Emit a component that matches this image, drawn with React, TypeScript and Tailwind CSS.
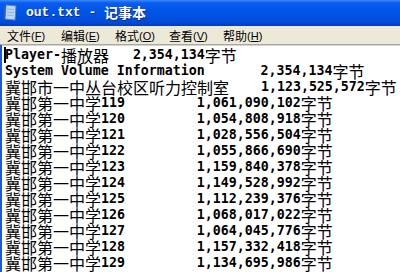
import React from "react";

const lines = [
  "Player-播放器   2,354,134字节",
  "System Volume Information       2,354,134字节",
  "冀邯市一中丛台校区听力控制室    1,123,525,572字节",
  "冀邯第一中学119         1,061,090,102字节",
  "冀邯第一中学120         1,054,808,918字节",
  "冀邯第一中学121         1,028,556,504字节",
  "冀邯第一中学122         1,055,866,690字节",
  "冀邯第一中学123         1,159,840,378字节",
  "冀邯第一中学124         1,149,528,992字节",
  "冀邯第一中学125         1,112,239,376字节",
  "冀邯第一中学126         1,068,017,022字节",
  "冀邯第一中学127         1,064,045,776字节",
  "冀邯第一中学128         1,157,332,418字节",
  "冀邯第一中学129         1,134,695,986字节",
];

const menus = [
  ["文件", "F"],
  ["编辑", "E"],
  ["格式", "O"],
  ["查看", "V"],
  ["帮助", "H"],
];

function Line({ text, first }: { text: string; first?: boolean }) {
  const parts = text.split(/([\u4e00-\u9fff]+)/).filter(Boolean);
  return (
    <div className="relative flex h-4 items-center whitespace-pre">
      {first && <span className="absolute left-[-1px] top-0 h-4 w-[2px] bg-black" />}
      {parts.map((p, i) =>
        /[\u4e00-\u9fff]/.test(p) ? (
          <span key={i} className="text-[16px] leading-4 font-normal [font-family:'Noto_Sans_CJK_SC',sans-serif]">
            {p}
          </span>
        ) : (
          <span key={i} className="text-[13.28px] leading-4 font-bold [font-family:'DejaVu_Sans_Mono',monospace]">
            {p}
          </span>
        )
      )}
    </div>
  );
}

function NotepadIcon() {
  return (
    <svg width="14" height="17" viewBox="0 0 14 17">
      <path d="M3 1 L13 2 L12 16 L2 15 Z" fill="#bcd6f2" stroke="#5a86c6" strokeWidth="1" />
      <path d="M1 2 L3 1 L2 15 L0.5 15.5 Z" fill="#2a5fb4" />
      <path d="M4 5 L11 5.6 M4 8 L11 8.6 M4 11 L10 11.5" stroke="#8fb2e0" strokeWidth="1" />
    </svg>
  );
}

export default function App() {
  return (
    <div className="h-[272px] w-[400px] overflow-hidden bg-white [font-family:'Liberation_Sans','Noto_Sans_CJK_SC',sans-serif]">
      <div className="flex h-[26px] items-center gap-[9px] border-b-2 border-[#003fc0] bg-[linear-gradient(to_bottom,#3d8cf8_0%,#0a5cf0_12%,#0055e6_45%,#004fdf_80%,#0046d0_100%)] pl-[3px] pt-[1px] text-white">
        <NotepadIcon />
        <div className="flex items-center whitespace-pre [text-shadow:1px_1px_0_#0a2a80]">
          <span className="text-[13px] font-bold [font-family:'Liberation_Mono',monospace]">out.txt - </span>
          <span className="text-[14px] font-bold [font-family:'Noto_Sans_CJK_SC',sans-serif]">记事本</span>
        </div>
      </div>
      <div className="flex h-[18px] items-center bg-[#ece9d8] pl-[7px] pt-[2px] text-[12px] text-black [font-family:'Noto_Sans_CJK_SC',sans-serif]">
        {menus.map(([name, key]) => (
          <div key={key} className="flex w-[54px] items-center">
            <span>{name}</span>
            <span className="text-[11px] [font-family:'Liberation_Sans',sans-serif]">
              (<span className="underline">{key}</span>)
            </span>
          </div>
        ))}
      </div>
      <div className="flex h-full border-t border-[#a7a6aa]">
        <div className="w-[2px] bg-[#1c5ad8]" />
        <div className="flex-1 border-t border-[#d8d4c6] pl-[3px] pt-[1px] text-black">
          {lines.map((l, i) => (
            <Line key={i} text={l} first={i === 0} />
          ))}
        </div>
      </div>
    </div>
  );
}
